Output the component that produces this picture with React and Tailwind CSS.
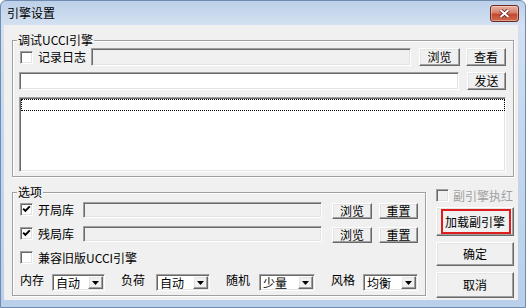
import React from 'react';

const raised =
  'border border-t-white border-l-white border-r-[#696969] border-b-[#696969] shadow-[inset_-1px_-1px_0_#a0a0a0,inset_1px_1px_0_#e3e3e3] bg-[#f0f0f0]';
const sunken =
  'border border-t-[#a0a0a0] border-l-[#a0a0a0] border-r-white border-b-white shadow-[inset_1px_1px_0_#696969,inset_-1px_-1px_0_#e3e3e3]';
const etched = 'relative border border-[#a0a0a0] shadow-[inset_1px_1px_0_#fff,1px_1px_0_#fff]';

function Btn({ children, className = '' }) {
  return (
    <div className={`${raised} flex items-center justify-center leading-none shrink-0 ${className}`}>
      {children}
    </div>
  );
}

function Check({ checked, disabled, className = '' }) {
  return (
    <div
      className={`w-[13px] h-[13px] shrink-0 ${sunken} ${disabled ? 'bg-[#f0f0f0]' : 'bg-white'} flex items-center justify-center ${className}`}
    >
      {checked && (
        <svg width="9" height="9" viewBox="0 0 9 9">
          <path d="M1.2 3.6 L3.4 5.9 L7.8 1.4" stroke="#000" strokeWidth="2" fill="none" />
        </svg>
      )}
    </div>
  );
}

function Combo({ value, className = '' }) {
  return (
    <div className={`${sunken} bg-white h-[17px] flex items-center justify-between pl-[3px] pr-[1px] shrink-0 ${className}`}>
      <span className="leading-none">{value}</span>
      <div className={`${raised} w-[15px] h-[13px] flex items-center justify-center`}>
        <svg width="7" height="4" viewBox="0 0 7 4">
          <path d="M0 0h7L3.5 4z" fill="#000" />
        </svg>
      </div>
    </div>
  );
}

function Legend({ children }) {
  return (
    <span className="absolute top-[-8px] left-[4px] px-[1px] bg-[#f0f0f0] leading-[14px]">{children}</span>
  );
}

const App = () => {
  return (
    <div className="w-[526px] h-[308px] border border-[#6f8cb0] rounded-t-[6px] bg-[linear-gradient(#bcd0e9,#d3e1f1_24px,#c6d8ee_120px,#b9cfea)] flex flex-col font-['Noto_Sans_CJK_SC','Noto_Sans',sans-serif] text-[12px] text-black overflow-hidden">
      {/* title bar */}
      <div className="h-[24px] flex items-center pl-[6px] shrink-0">
        <span className="leading-none">引擎设置</span>
        <div className="ml-auto mr-[6px] w-[29px] h-[17px] rounded-[3px] border border-[#6d2a21] bg-[linear-gradient(#e9b1a3,#d7806c_45%,#c4482f_55%,#cf6a4f)] shadow-[inset_0_0_0_1px_rgba(255,255,255,0.35)] flex items-center justify-center">
          <svg width="11" height="9" viewBox="0 0 11 9">
            <path d="M1.5 1 L9.5 8 M9.5 1 L1.5 8" stroke="#6a2216" strokeWidth="3.6" />
            <path d="M1.5 1 L9.5 8 M9.5 1 L1.5 8" stroke="#fff" strokeWidth="2" />
          </svg>
        </div>
      </div>

      {/* client area */}
      <div className="ml-[3px] w-[514px] h-[275px] bg-[#f0f0f0] pl-[8px] pt-[15px] flex flex-col shrink-0">
        {/* 调试UCCI引擎 */}
        <div className={`${etched} w-[502px] h-[137px] pl-[6px] pt-[7px] flex flex-col`}>
          <Legend>调试UCCI引擎</Legend>
          <div className="flex items-center h-[18px]">
            <Check className="ml-[1px]" />
            <span className="ml-[5px] w-[48px] leading-none">记录日志</span>
            <div className={`${sunken} ml-[5px] w-[320px] h-[18px] bg-[#f0f0f0]`} />
            <Btn className="ml-[8px] w-[41px] h-[18px]">浏览</Btn>
            <Btn className="ml-[6px] w-[40px] h-[18px]">查看</Btn>
          </div>
          <div className="flex items-center h-[18px] mt-[6px]">
            <div className={`${sunken} w-[440px] h-[18px] bg-white`} />
            <Btn className="ml-[8px] w-[39px] h-[18px]">发送</Btn>
          </div>
          <div className={`${sunken} mt-[7px] w-[487px] h-[75px] bg-white`}>
            <div className="mt-[1px] ml-[1px] h-[12px] border border-dotted border-black" />
          </div>
        </div>

        <div className="flex items-start">
          {/* 选项 */}
          <div className={`${etched} mt-[15px] w-[414px] h-[104px] pl-[7px] pt-[9px] flex flex-col`}>
            <Legend>选项</Legend>
            <div className="flex items-start h-[17px]">
              <Check checked className="mt-[1px]" />
              <span className="ml-[5px] w-[36px] leading-[16px]">开局库</span>
              <div className={`${sunken} ml-[9px] w-[239px] h-[16px] bg-[#f0f0f0]`} />
              <Btn className="ml-[10px] mt-[1px] w-[40px] h-[16px]">浏览</Btn>
              <Btn className="ml-[7px] mt-[1px] w-[39px] h-[16px]">重置</Btn>
            </div>
            <div className="flex items-start h-[17px] mt-[7px]">
              <Check checked className="mt-[1px]" />
              <span className="ml-[5px] w-[36px] leading-[16px]">残局库</span>
              <div className={`${sunken} ml-[9px] w-[239px] h-[16px] bg-[#f0f0f0]`} />
              <Btn className="ml-[10px] mt-[1px] w-[40px] h-[16px]">浏览</Btn>
              <Btn className="ml-[7px] mt-[1px] w-[39px] h-[16px]">重置</Btn>
            </div>
            <div className="flex items-center h-[13px] mt-[8px]">
              <Check />
              <span className="ml-[5px] leading-none">兼容旧版UCCI引擎</span>
            </div>
            <div className="flex items-start mt-[9px]">
              <span className="w-[24px] leading-[14px]">内存</span>
              <Combo value="自动" className="ml-[8px] mt-[1px] w-[53px]" />
              <span className="ml-[16px] w-[24px] leading-[14px]">负荷</span>
              <Combo value="自动" className="ml-[11px] mt-[1px] w-[54px]" />
              <span className="ml-[16px] w-[24px] leading-[14px]">随机</span>
              <Combo value="少量" className="ml-[9px] mt-[1px] w-[56px]" />
              <span className="ml-[16px] w-[24px] leading-[14px]">风格</span>
              <Combo value="均衡" className="ml-[8px] mt-[1px] w-[55px]" />
            </div>
          </div>

          {/* right column */}
          <div className="ml-[10px] w-[78px] flex flex-col">
            <div className="flex items-center h-[13px] mt-[12px]">
              <Check disabled />
              <span className="ml-[4px] leading-none text-[#a0a0a0]">副引擎执红</span>
            </div>
            <Btn className="relative mt-[5px] w-[78px] h-[29px]">
              加载副引擎
              <span className="absolute left-[4px] right-[2px] top-[1px] bottom-[1px] border-2 border-[#dd1c1c]" />
            </Btn>
            <Btn className="mt-[6px] w-[78px] h-[24px]">确定</Btn>
            <Btn className="mt-[6px] w-[78px] h-[26px]">取消</Btn>
          </div>
        </div>
      </div>
    </div>
  );
};

export default App;
